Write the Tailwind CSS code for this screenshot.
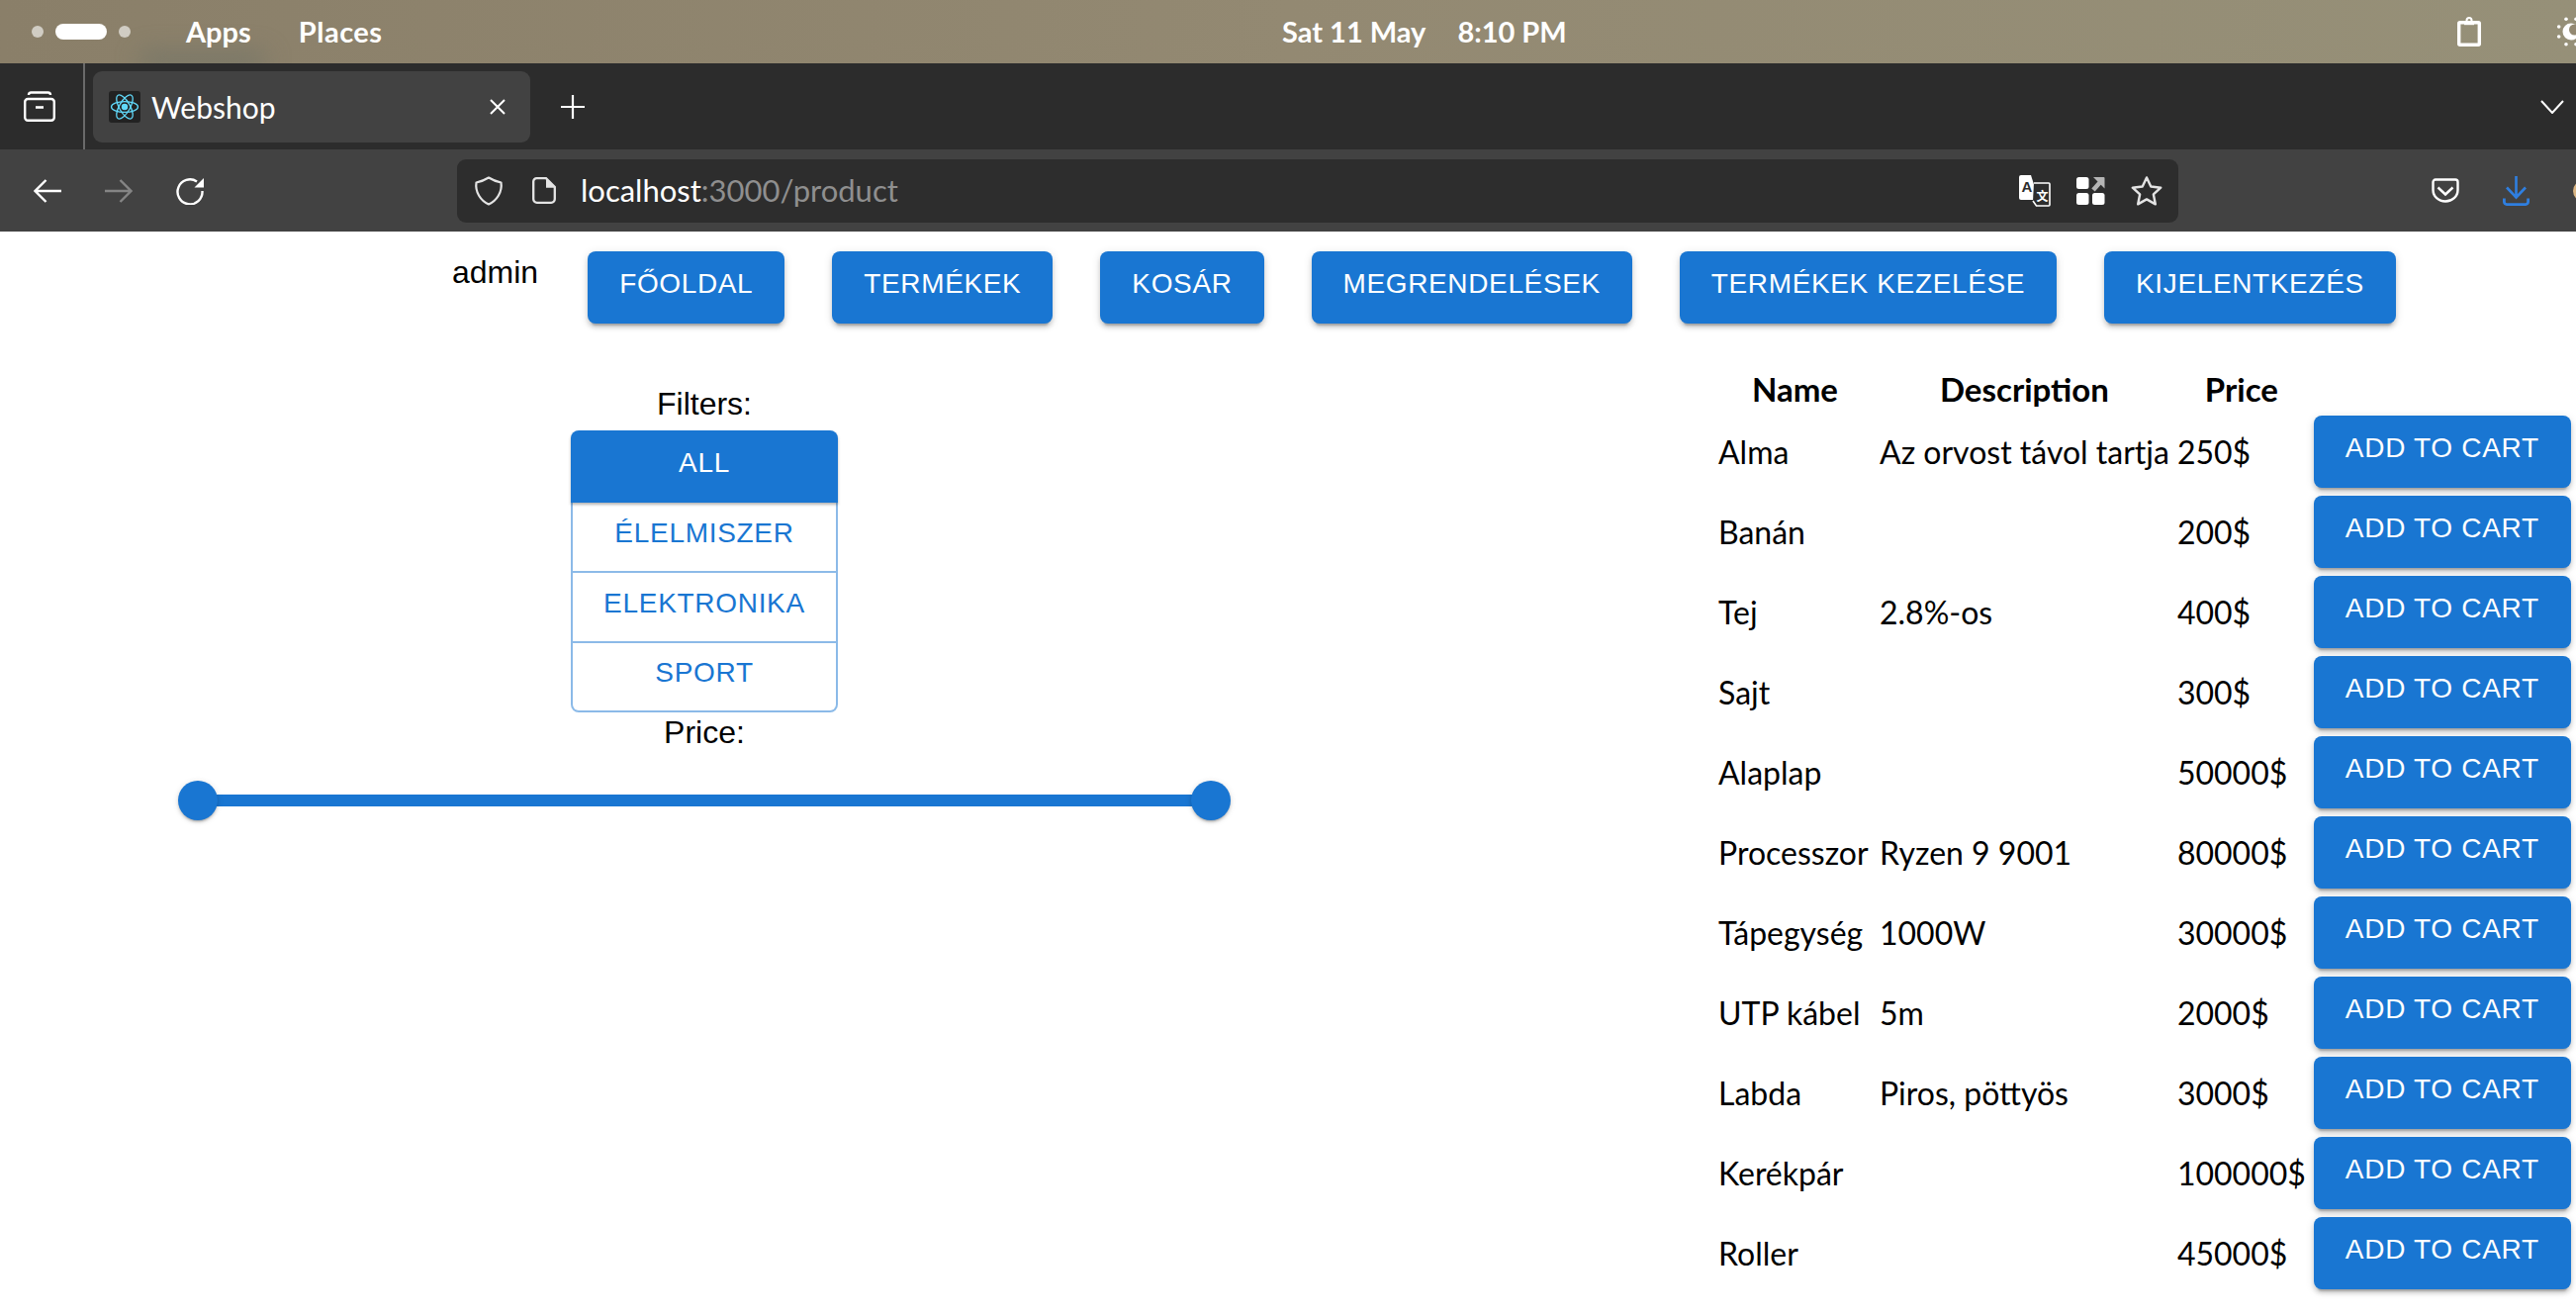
<!DOCTYPE html>
<html><head><meta charset="utf-8"><title>Webshop</title>
<script src="https://cdn.jsdelivr.net/npm/@tailwindcss/browser@4"></script></head>
<body class="bg-white">
<div class="w-[2604px] h-[1329px] overflow-hidden flex flex-col bg-white font-['Liberation_Sans',sans-serif]">
  <!-- GNOME top bar -->
  <div class="h-[64px] shrink-0 flex items-center overflow-hidden bg-gradient-to-r from-[#8a7f69] via-[#938972] to-[#969078] text-white font-['Lato',sans-serif] font-bold text-[29px] relative">
    <div class="absolute left-[140px] top-[52px] w-[130px] h-[20px] rounded-full bg-[#6a6f66]/60 blur-md"></div>
    <div class="w-[1296px] shrink-0 flex items-center relative">
      <span class="ml-[32px] w-[12px] h-[12px] rounded-full bg-white/60"></span>
      <span class="ml-[12px] w-[52px] h-[16px] rounded-full bg-white"></span>
      <span class="ml-[12px] w-[12px] h-[12px] rounded-full bg-white/60"></span>
      <span class="ml-[56px]">Apps</span>
      <span class="ml-[48px] tracking-[0.5px]">Places</span>
    </div>
    <span>Sat 11 May</span>
    <span class="ml-[32px]">8:10 PM</span>
    <div class="ml-auto w-[120px] shrink-0 flex items-center">
      <svg class="w-[24px] h-[30px] shrink-0" viewBox="0 0 24 30" fill="none" stroke="#fff"><rect x="1.700" y="5.700" width="20.600" height="22.600" rx="1" stroke-width="3.400"/><circle cx="12" cy="3.500" r="2.500" stroke-width="2"/><path d="M7 6.500h10" stroke-width="3.400"/></svg>
      <svg class="ml-[75px] w-[32px] h-[32px] shrink-0" viewBox="0 0 32 32"><circle cx="16" cy="16" r="8.500" fill="#fff"/><circle cx="19.500" cy="14" r="5.500" fill="#938972"/><g fill="#fff"><circle cx="3.700" cy="11" r="1.800"/><circle cx="3.700" cy="21" r="1.800"/><circle cx="11" cy="3.300" r="1.800"/><circle cx="11" cy="28.700" r="1.800"/><circle cx="21" cy="3.300" r="1.800"/><circle cx="21" cy="28.700" r="1.800"/><circle cx="28.300" cy="11" r="1.800"/><circle cx="28.300" cy="21" r="1.800"/></g></svg>
    </div>
  </div>
  <!-- tab bar -->
  <div class="h-[87px] shrink-0 flex items-center bg-[#2c2c2c] text-white font-['Lato',sans-serif]">
    <div class="w-[86px] h-full shrink-0 border-r-2 border-[#6a6a6a] flex items-center pl-[24px]">
      <svg class="w-[32px] h-[31px]" viewBox="0 0 32 31" fill="none" stroke="#fff" stroke-width="2.400"><path d="M5 4c0-1.500 1-2.500 2.500-2.500h17C26 1.500 27 2.500 27 4"/><rect x="1.200" y="8" width="29.600" height="21.800" rx="3"/><path d="M12 16.500h8" stroke-width="2.600"/></svg>
    </div>
    <div class="ml-[8px] w-[442px] h-[72px] shrink-0 rounded-[9px] bg-[#424242] flex items-center pl-[16px]">
      <span class="w-[32px] h-[32px] rounded-[3px] bg-[#222222] flex items-center justify-center">
        <svg class="w-[30px] h-[30px]" viewBox="0 0 30 30" fill="none" stroke="#61dafb" stroke-width="1.300"><ellipse cx="15" cy="15" rx="13.500" ry="5.400"/><ellipse cx="15" cy="15" rx="13.500" ry="5.400" transform="rotate(60 15 15)"/><ellipse cx="15" cy="15" rx="13.500" ry="5.400" transform="rotate(120 15 15)"/><circle cx="15" cy="15" r="2.600" fill="#61dafb"/></svg>
      </span>
      <span class="ml-[11px] w-[218px] shrink-0 text-[30px] leading-none">Webshop</span>
      <svg class="ml-[123px] w-[18px] h-[18px] shrink-0" viewBox="0 0 18 18" stroke="#fff" stroke-width="2"><path d="M2 2l14 14M16 2L2 16"/></svg>
    </div>
    <svg class="ml-[31px] w-[24px] h-[24px] shrink-0" viewBox="0 0 24 24" stroke="#fff" stroke-width="2.200"><path d="M12 0v24M0 12h24"/></svg>
    <svg class="ml-auto mr-[12px] w-[24px] h-[14px] shrink-0" viewBox="0 0 24 14" fill="none" stroke="#fff" stroke-width="2"><path d="M1 1l11 12L23 1"/></svg>
  </div>
  <!-- toolbar -->
  <div class="h-[83px] shrink-0 flex items-center bg-[#424242] text-white font-['Lato',sans-serif]">
    <svg class="ml-[34px] w-[28px] h-[24px] shrink-0" viewBox="0 0 28 24" fill="none" stroke="#fff" stroke-width="2.400"><path d="M28 12H2M12.500 1L1.500 12l11 11"/></svg>
    <svg class="ml-[44px] w-[28px] h-[24px] shrink-0" viewBox="0 0 28 24" fill="none" stroke="#858585" stroke-width="2.400"><path d="M0 12h26M15.500 1l11 11-11 11"/></svg>
    <svg class="ml-[44px] w-[29px] h-[28px] shrink-0" viewBox="0 0 29 28" fill="none" stroke="#fff" stroke-width="2.400"><path d="M21 4.500A12.500 12.500 0 1 0 26.500 14"/><path d="M28 1v9.500h-9.500z" fill="#fff" stroke="none"/></svg>
    <div class="ml-[255px] w-[1740px] h-[64px] shrink-0 rounded-[9px] bg-[#2d2d2d] flex items-center pl-[17px] pr-[16px]">
      <svg class="w-[30px] h-[30px] shrink-0" viewBox="0 0 30 30" fill="none" stroke="#e4e4e4" stroke-width="2.200" stroke-linejoin="round"><path d="M15 1.500C19 4 23 5.500 27.500 6.500 29 16 23 25 15 28.500 7 25 1 16 2.500 6.500 7 5.500 11 4 15 1.500z"/></svg>
      <svg class="ml-[29px] w-[24px] h-[27px] shrink-0" viewBox="0 0 24 27"><path d="M14 1.200v9.500h8.800z" fill="#e4e4e4"/><path d="M4.500 1.200H14L22.800 10v12.300a3.500 3.500 0 0 1-3.500 3.500H4.700a3.500 3.500 0 0 1-3.500-3.500V4.500a3.300 3.300 0 0 1 3.300-3.300z" fill="none" stroke="#e4e4e4" stroke-width="2.300"/></svg>
      <span class="ml-[25px] text-[31px] leading-none">localhost<span class="text-[#8f8f8f]">:3000/product</span></span>
      <svg class="ml-auto w-[32px] h-[32px] shrink-0" viewBox="0 0 32 32"><path d="M2 0h10l8 25H2a2 2 0 0 1-2-2V2a2 2 0 0 1 2-2z" fill="#fff"/><path d="M15 8h15a1 1 0 0 1 1 1v21a1 1 0 0 1-1 1H17.500L14 26" fill="#2d2d2d" stroke="#fff" stroke-width="1.600"/><text x="2.500" y="17" font-size="15" font-weight="700" fill="#2d2d2d" font-family="Liberation Sans">A</text><text x="17.500" y="26" font-size="12" font-weight="700" fill="#fff" font-family="Noto Sans CJK SC">文</text></svg>
      <svg class="ml-[26px] w-[29px] h-[28px] shrink-0" viewBox="0 0 29 28"><rect x="0" y="0" width="12.500" height="12" rx="2.500" fill="#fff"/><rect x="0" y="16" width="12.500" height="12" rx="2.500" fill="#fff"/><rect x="16" y="16" width="12.500" height="12" rx="2.500" fill="#fff"/><path d="M17 13L25 4" stroke="#b5b5b5" stroke-width="4.500" fill="none"/><path d="M17 0h10.500a1 1 0 0 1 1 1v10.500z" fill="#b5b5b5"/></svg>
      <svg class="ml-[26px] w-[32px] h-[30px] shrink-0" viewBox="0 0 33 31" fill="none" stroke="#e4e4e4" stroke-width="2.500" stroke-linejoin="round"><path d="M16.500 1.500l4.400 9.400 10.300 1.200-7.600 7 2 10.200-9.100-5.100-9.100 5.100 2-10.200-7.600-7 10.300-1.200z"/></svg>
    </div>
    <svg class="ml-[256px] w-[28px] h-[25px] shrink-0" viewBox="0 0 28 25" fill="none" stroke="#fff" stroke-width="2.400"><path d="M4 1.500h20a2.500 2.500 0 0 1 2.500 2.500v8c0 6.500-5.500 11.500-12.500 11.500S1.500 18.500 1.500 12V4A2.500 2.500 0 0 1 4 1.500z"/><path d="M6.500 9.500l7.500 7 7.500-7"/></svg>
    <svg class="ml-[44px] w-[27px] h-[30px] shrink-0" viewBox="0 0 27 30" fill="none" stroke="#2f7fe0" stroke-width="2.600"><path d="M13.500 0v21M4 11.500l9.500 10 9.500-10"/><path d="M1.400 22.500v3.600a2.500 2.500 0 0 0 2.500 2.500h19.200a2.500 2.500 0 0 0 2.500-2.500v-3.600" stroke-width="2.800"/></svg>
    <span class="ml-[44px] w-[22px] h-[22px] shrink-0 rounded-full bg-[#d9b583]"></span>
  </div>
  <!-- page -->
  <div class="flex-1 min-h-0">
    <div class="flex items-start pl-[457px] pt-[20px]">
      <span class="text-[32px] leading-[37px] mt-[3px] text-black">admin</span>
      <div class="ml-[50px] flex gap-[48px]">
        <button class="h-[73px] px-[32px] pb-[8px] rounded-[8px] bg-[#1976d2] text-white text-[28px] tracking-[0.63px] shadow-[0_6px_2px_-4px_rgba(0,0,0,.2),0_4px_4px_0_rgba(0,0,0,.14),0_2px_10px_0_rgba(0,0,0,.12)]">FŐOLDAL</button>
        <button class="h-[73px] px-[32px] pb-[8px] rounded-[8px] bg-[#1976d2] text-white text-[28px] tracking-[0.63px] shadow-[0_6px_2px_-4px_rgba(0,0,0,.2),0_4px_4px_0_rgba(0,0,0,.14),0_2px_10px_0_rgba(0,0,0,.12)]">TERMÉKEK</button>
        <button class="h-[73px] px-[32px] pb-[8px] rounded-[8px] bg-[#1976d2] text-white text-[28px] tracking-[0.63px] shadow-[0_6px_2px_-4px_rgba(0,0,0,.2),0_4px_4px_0_rgba(0,0,0,.14),0_2px_10px_0_rgba(0,0,0,.12)]">KOSÁR</button>
        <button class="h-[73px] px-[32px] pb-[8px] rounded-[8px] bg-[#1976d2] text-white text-[28px] tracking-[0.63px] shadow-[0_6px_2px_-4px_rgba(0,0,0,.2),0_4px_4px_0_rgba(0,0,0,.14),0_2px_10px_0_rgba(0,0,0,.12)]">MEGRENDELÉSEK</button>
        <button class="h-[73px] px-[32px] pb-[8px] rounded-[8px] bg-[#1976d2] text-white text-[28px] tracking-[0.63px] shadow-[0_6px_2px_-4px_rgba(0,0,0,.2),0_4px_4px_0_rgba(0,0,0,.14),0_2px_10px_0_rgba(0,0,0,.12)]">TERMÉKEK KEZELÉSE</button>
        <button class="h-[73px] px-[32px] pb-[8px] rounded-[8px] bg-[#1976d2] text-white text-[28px] tracking-[0.63px] shadow-[0_6px_2px_-4px_rgba(0,0,0,.2),0_4px_4px_0_rgba(0,0,0,.14),0_2px_10px_0_rgba(0,0,0,.12)]">KIJELENTKEZÉS</button>
      </div>
    </div>
    <div class="flex items-start">
      <div class="w-[1424px] shrink-0 flex flex-col items-center pt-[63px]">
        <div class="text-[32px] leading-[37px] text-black">Filters:</div>
        <div class="mt-[8px] w-[270px] flex flex-col text-[28px] tracking-[0.7px] text-[#1976d2]">
          <div class="h-[73px] pb-[8px] rounded-t-[8px] bg-[#1976d2] text-white flex items-center justify-center shadow-[0_2px_3px_rgba(0,0,0,.3)] relative">ALL</div>
          <div class="h-[71px] pb-[8px] border-x-2 border-b-2 border-[#1976d2]/50 flex items-center justify-center">ÉLELMISZER</div>
          <div class="h-[71px] pb-[8px] border-x-2 border-b-2 border-[#1976d2]/50 flex items-center justify-center">ELEKTRONIKA</div>
          <div class="h-[70px] pb-[8px] border-x-2 border-b-2 rounded-b-[8px] border-[#1976d2]/50 flex items-center justify-center">SPORT</div>
        </div>
        <div class="mt-[2px] text-[32px] leading-[37px] text-black">Price:</div>
        <div class="relative mt-[44px] w-[1024px] h-[12px] rounded-full bg-[#1976d2]">
          <span class="absolute left-[-20px] top-[-14px] w-[40px] h-[40px] rounded-full bg-[#1976d2] shadow-[0_3px_2px_-2px_rgba(0,0,0,.2),0_2px_3px_0_rgba(0,0,0,.14),0_1px_6px_0_rgba(0,0,0,.12)]"></span>
          <span class="absolute right-[-20px] top-[-14px] w-[40px] h-[40px] rounded-full bg-[#1976d2] shadow-[0_3px_2px_-2px_rgba(0,0,0,.2),0_2px_3px_0_rgba(0,0,0,.14),0_1px_6px_0_rgba(0,0,0,.12)]"></span>
        </div>
      </div>
      <table class="ml-[307px] mt-[35px] border-separate border-spacing-[4px] shrink-0 text-[32px] text-black font-['Lato',sans-serif] [&_td]:p-[2px] [&_th]:pt-[8px] [&_th]:pb-[2px] [&_th]:px-[2px] [&_td]:whitespace-nowrap">
        <thead class="text-[33px] leading-[38px]"><tr><th class="font-bold w-[159px]">Name</th><th class="font-bold">Description</th><th class="font-bold">Price</th><th></th></tr></thead>
        <tbody>
          <tr><td>Alma</td><td>Az orvost távol tartja</td><td>250$</td><td><button class="h-[73px] w-[260px] pb-[8px] rounded-[8px] bg-[#1976d2] text-white text-[28px] tracking-[0.7px] font-['Liberation_Sans',sans-serif] shadow-[0_6px_2px_-4px_rgba(0,0,0,.2),0_4px_4px_0_rgba(0,0,0,.14),0_2px_10px_0_rgba(0,0,0,.12)]">ADD TO CART</button></td></tr>
          <tr><td>Banán</td><td></td><td>200$</td><td><button class="h-[73px] w-[260px] pb-[8px] rounded-[8px] bg-[#1976d2] text-white text-[28px] tracking-[0.7px] font-['Liberation_Sans',sans-serif] shadow-[0_6px_2px_-4px_rgba(0,0,0,.2),0_4px_4px_0_rgba(0,0,0,.14),0_2px_10px_0_rgba(0,0,0,.12)]">ADD TO CART</button></td></tr>
          <tr><td>Tej</td><td>2.8%-os</td><td>400$</td><td><button class="h-[73px] w-[260px] pb-[8px] rounded-[8px] bg-[#1976d2] text-white text-[28px] tracking-[0.7px] font-['Liberation_Sans',sans-serif] shadow-[0_6px_2px_-4px_rgba(0,0,0,.2),0_4px_4px_0_rgba(0,0,0,.14),0_2px_10px_0_rgba(0,0,0,.12)]">ADD TO CART</button></td></tr>
          <tr><td>Sajt</td><td></td><td>300$</td><td><button class="h-[73px] w-[260px] pb-[8px] rounded-[8px] bg-[#1976d2] text-white text-[28px] tracking-[0.7px] font-['Liberation_Sans',sans-serif] shadow-[0_6px_2px_-4px_rgba(0,0,0,.2),0_4px_4px_0_rgba(0,0,0,.14),0_2px_10px_0_rgba(0,0,0,.12)]">ADD TO CART</button></td></tr>
          <tr><td>Alaplap</td><td></td><td>50000$</td><td><button class="h-[73px] w-[260px] pb-[8px] rounded-[8px] bg-[#1976d2] text-white text-[28px] tracking-[0.7px] font-['Liberation_Sans',sans-serif] shadow-[0_6px_2px_-4px_rgba(0,0,0,.2),0_4px_4px_0_rgba(0,0,0,.14),0_2px_10px_0_rgba(0,0,0,.12)]">ADD TO CART</button></td></tr>
          <tr><td>Processzor</td><td>Ryzen 9 9001</td><td>80000$</td><td><button class="h-[73px] w-[260px] pb-[8px] rounded-[8px] bg-[#1976d2] text-white text-[28px] tracking-[0.7px] font-['Liberation_Sans',sans-serif] shadow-[0_6px_2px_-4px_rgba(0,0,0,.2),0_4px_4px_0_rgba(0,0,0,.14),0_2px_10px_0_rgba(0,0,0,.12)]">ADD TO CART</button></td></tr>
          <tr><td>Tápegység</td><td>1000W</td><td>30000$</td><td><button class="h-[73px] w-[260px] pb-[8px] rounded-[8px] bg-[#1976d2] text-white text-[28px] tracking-[0.7px] font-['Liberation_Sans',sans-serif] shadow-[0_6px_2px_-4px_rgba(0,0,0,.2),0_4px_4px_0_rgba(0,0,0,.14),0_2px_10px_0_rgba(0,0,0,.12)]">ADD TO CART</button></td></tr>
          <tr><td>UTP kábel</td><td>5m</td><td>2000$</td><td><button class="h-[73px] w-[260px] pb-[8px] rounded-[8px] bg-[#1976d2] text-white text-[28px] tracking-[0.7px] font-['Liberation_Sans',sans-serif] shadow-[0_6px_2px_-4px_rgba(0,0,0,.2),0_4px_4px_0_rgba(0,0,0,.14),0_2px_10px_0_rgba(0,0,0,.12)]">ADD TO CART</button></td></tr>
          <tr><td>Labda</td><td>Piros, pöttyös</td><td>3000$</td><td><button class="h-[73px] w-[260px] pb-[8px] rounded-[8px] bg-[#1976d2] text-white text-[28px] tracking-[0.7px] font-['Liberation_Sans',sans-serif] shadow-[0_6px_2px_-4px_rgba(0,0,0,.2),0_4px_4px_0_rgba(0,0,0,.14),0_2px_10px_0_rgba(0,0,0,.12)]">ADD TO CART</button></td></tr>
          <tr><td>Kerékpár</td><td></td><td>100000$</td><td><button class="h-[73px] w-[260px] pb-[8px] rounded-[8px] bg-[#1976d2] text-white text-[28px] tracking-[0.7px] font-['Liberation_Sans',sans-serif] shadow-[0_6px_2px_-4px_rgba(0,0,0,.2),0_4px_4px_0_rgba(0,0,0,.14),0_2px_10px_0_rgba(0,0,0,.12)]">ADD TO CART</button></td></tr>
          <tr><td>Roller</td><td></td><td>45000$</td><td><button class="h-[73px] w-[260px] pb-[8px] rounded-[8px] bg-[#1976d2] text-white text-[28px] tracking-[0.7px] font-['Liberation_Sans',sans-serif] shadow-[0_6px_2px_-4px_rgba(0,0,0,.2),0_4px_4px_0_rgba(0,0,0,.14),0_2px_10px_0_rgba(0,0,0,.12)]">ADD TO CART</button></td></tr>
        </tbody>
      </table>
    </div>
  </div>
</div>
</body></html>
